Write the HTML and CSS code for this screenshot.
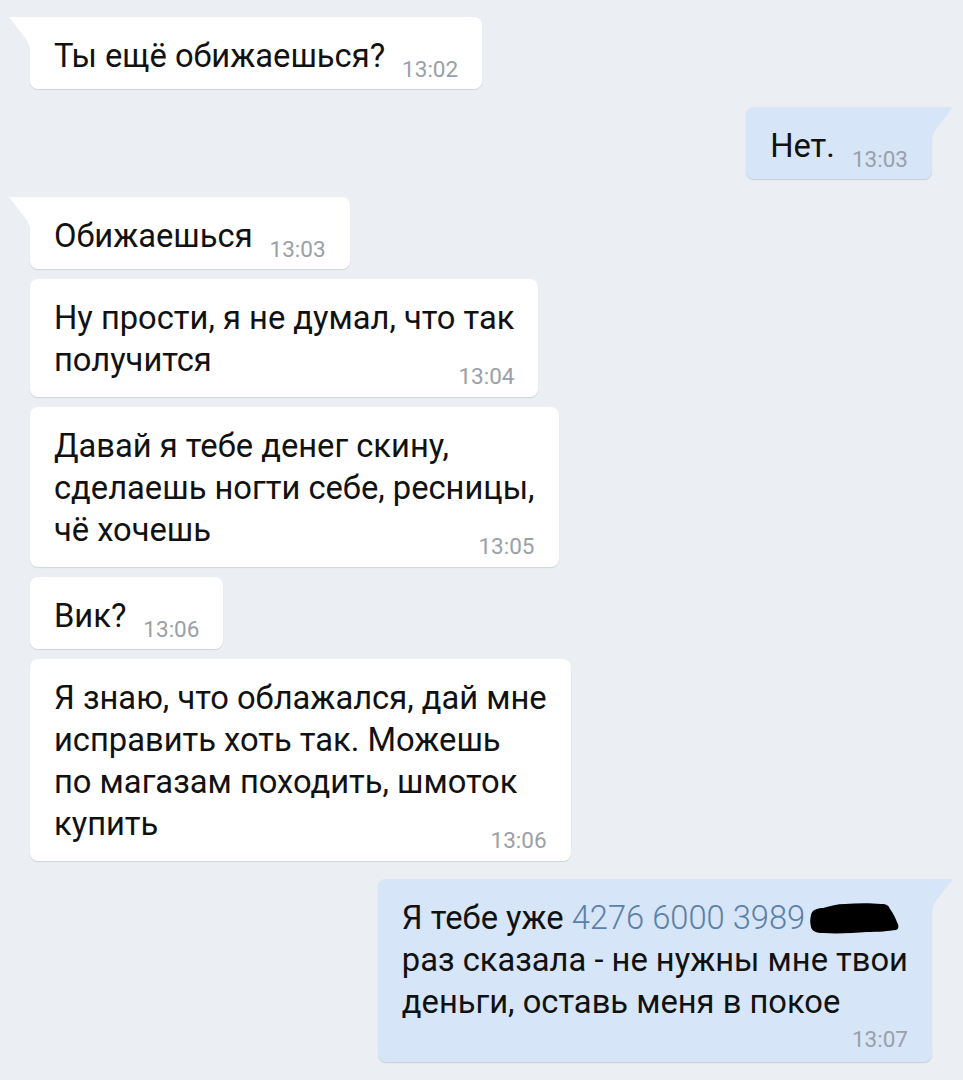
FILE: index.html
```html
<!DOCTYPE html>
<html lang="ru">
<head>
<meta charset="utf-8">
<title>Чат</title>
<link rel="stylesheet" href="styles.css">
</head>
<body>
<div class="chat">
  <div class="msg in first">
    <div class="bubble tail single"><span class="text">Ты ещё обижаешься?</span><span class="time">13:02</span></div>
  </div>
  <div class="msg out first">
    <div class="bubble tail single"><span class="text">Нет.</span><span class="time">13:03</span></div>
  </div>
  <div class="msg in first">
    <div class="bubble tail single"><span class="text">Обижаешься</span><span class="time">13:03</span></div>
  </div>
  <div class="msg in">
    <div class="bubble multi"><p class="text">Ну прости, я не думал, что так<br>получится</p><div class="time-row"><span class="time">13:04</span></div></div>
  </div>
  <div class="msg in">
    <div class="bubble multi"><p class="text">Давай я тебе денег скину,<br>сделаешь ногти себе, ресницы,<br>чё хочешь</p><div class="time-row"><span class="time">13:05</span></div></div>
  </div>
  <div class="msg in">
    <div class="bubble single"><span class="text">Вик?</span><span class="time">13:06</span></div>
  </div>
  <div class="msg in">
    <div class="bubble multi"><p class="text">Я знаю, что облажался, дай мне<br>исправить хоть так. Можешь<br>по магазам походить, шмоток<br>купить</p><div class="time-row"><span class="time">13:06</span></div></div>
  </div>
  <div class="msg out first">
    <div class="bubble tail multi own"><p class="text">Я тебе уже <span class="card">4276 6000 3989</span><svg class="redact" width="90" height="34" viewBox="0 0 90 34"><path d="M2 14 C3 9 8 7 14 7 C22 5 28 3 36 3 C48 2 62 2 72 3 C78 3 80 5 81 8 C84 12 86 16 88 21 C90 25 90 28 87 29 C80 30 70 31 58 31 C44 32 28 33 14 32 C7 32 3 30 2 26 C1 22 1 18 2 14 Z" fill="#000"/></svg><br>раз сказала - не нужны мне твои<br>деньги, оставь меня в покое</p><div class="time-row"><span class="time">13:07</span></div></div>
  </div>
</div>
</body>
</html>
```

FILE: styles.css
```css
html, body {
  margin: 0;
  padding: 0;
}

body {
  background: #ebeef2;
  font-family: Roboto, "Noto Sans", "Liberation Sans", sans-serif;
  width: 963px;
  height: 1080px;
  overflow: hidden;
}

.chat {
  display: flex;
  flex-direction: column;
  padding: 17px 31px 0 30px;
}

.msg {
  display: flex;
  margin-top: 10px;
}

.msg.first {
  margin-top: 18px;
}

.msg:first-child {
  margin-top: 0;
}

.msg.in {
  justify-content: flex-start;
}

.msg.out {
  justify-content: flex-end;
}

.bubble {
  position: relative;
  background: #ffffff;
  border-radius: 8px;
  box-shadow: 0 1px 1px rgba(60, 80, 110, 0.16);
  color: #111;
  font-size: 32.7px;
  line-height: 42px;
  padding: 18px 24px 9px 24px;
  white-space: nowrap;
}

.msg.out .bubble {
  background: #d6e5f7;
  box-shadow: 0 1px 1px rgba(60, 90, 130, 0.22);
}

.bubble.multi {
  padding-bottom: 10px;
}

.bubble.multi.own {
  padding-bottom: 12px;
}

.text {
  margin: 0;
}

.time {
  font-size: 22.5px;
  line-height: 22px;
  color: #9aa0a8;
  margin-left: 17px;
  vertical-align: -10px;
}

.time-row {
  text-align: right;
  line-height: 22px;
  margin-top: -19px;
}

.time-row .time {
  margin-left: 0;
  vertical-align: baseline;
}

.own .time-row {
  margin-top: 2px;
}

.card {
  color: #5b80a8;
  font-weight: 300;
}

.redact {
  vertical-align: -6px;
  margin-left: 4px;
}

/* tails */
.msg.in .bubble.tail {
  border-top-left-radius: 0;
}

.msg.out .bubble.tail {
  border-top-right-radius: 0;
}

.bubble.tail::before {
  content: "";
  position: absolute;
  top: 0;
  width: 24px;
  height: 34px;
  background: inherit;
}

.msg.in .bubble.tail::before {
  left: -22px;
  clip-path: polygon(1px 0, 24px 0, 24px 34px, 22px 31px, 21px 28px, 19.5px 24px, 1px 0);
}

.msg.out .bubble.tail::before {
  right: -22px;
  clip-path: polygon(0 0, 23px 0, 4.5px 24px, 3px 28px, 2px 31px, 0 34px);
}
```
